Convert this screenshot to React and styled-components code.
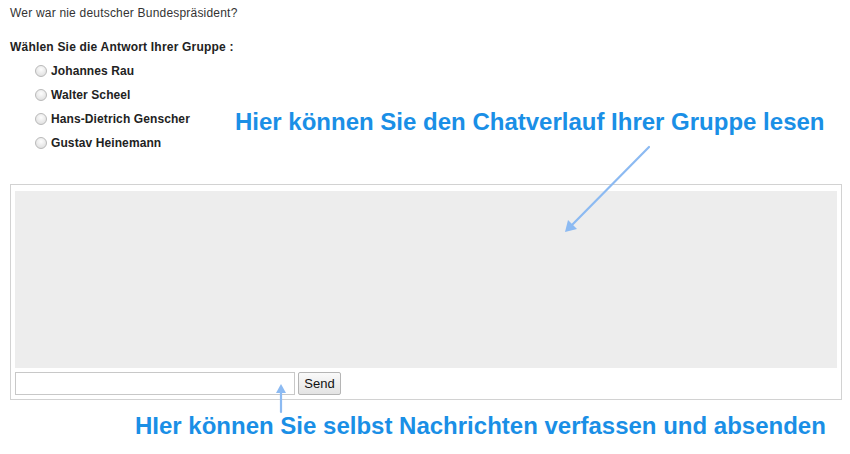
import React from "react";
import styled, { createGlobalStyle } from "styled-components";

const Global = createGlobalStyle`
  html, body { margin: 0; padding: 0; background: #fff; }
  body { font-family: "Liberation Sans", Arial, sans-serif; color: #333; }
`;

const Page = styled.div`
  position: relative;
  width: 850px;
  height: 454px;
  padding: 0 8px 0 10px;
  box-sizing: border-box;
  overflow: hidden;
`;

const Question = styled.p`
  margin: 0;
  padding-top: 6px;
  font-size: 12px;
  line-height: 14px;
  letter-spacing: 0.2px;
  color: #333;
`;

const Prompt = styled.p`
  margin: 20px 0 0;
  font-size: 12px;
  line-height: 14px;
  letter-spacing: 0.2px;
  font-weight: bold;
  color: #222;
`;

const Options = styled.div`
  display: flex;
  flex-direction: column;
  gap: 10px;
  margin-top: 10px;
  padding-left: 25px;
`;

const Option = styled.label`
  display: flex;
  align-items: center;
  gap: 4px;
  height: 14px;
  font-size: 12px;
  letter-spacing: 0.1px;
  font-weight: bold;
  color: #222;
`;

const Radio = styled.span`
  width: 10px;
  height: 10px;
  border-radius: 50%;
  border: 1px solid #b9b9b9;
  background: radial-gradient(circle at 50% 35%, #fdfdfd 0%, #e4e4e4 70%, #d2d2d2 100%);
  flex: none;
`;

const ChatBox = styled.div`
  margin-top: 34px;
  width: 832px;
  box-sizing: border-box;
  border: 1px solid #d2d2d2;
  padding: 6px 4px 4px 4px;
  display: flex;
  flex-direction: column;
  gap: 4px;
`;

const History = styled.div`
  height: 177px;
  background: #ededed;
`;

const InputRow = styled.div`
  display: flex;
  gap: 3px;
`;

const TextInput = styled.input`
  width: 280px;
  height: 23px;
  box-sizing: border-box;
  border: 1px solid #c8c8c8;
  background: #fff;
  padding: 0 4px;
  margin: 0;
  font-family: inherit;
`;

const SendButton = styled.button`
  width: 43px;
  height: 23px;
  box-sizing: border-box;
  border: 1px solid #b5b5b5;
  border-radius: 2px;
  background: linear-gradient(#fafafa, #e3e3e3);
  font-family: "Liberation Sans", Arial, sans-serif;
  font-size: 13px;
  color: #111;
  padding: 0;
  margin: 0;
`;

const Callout = styled.div`
  position: absolute;
  left: ${(p) => p.$x}px;
  top: ${(p) => p.$y}px;
  font-size: 24px;
  line-height: 28px;
  font-weight: bold;
  color: #1a8fe6;
  white-space: nowrap;
`;

const ArrowLayer = styled.svg`
  position: absolute;
  left: 0;
  top: 0;
  width: 850px;
  height: 454px;
  pointer-events: none;
`;

export default function App() {
  return (
    <>
      <Global />
      <Page>
        <Question>Wer war nie deutscher Bundespräsident?</Question>
        <Prompt>Wählen Sie die Antwort Ihrer Gruppe :</Prompt>
        <Options>
          {["Johannes Rau", "Walter Scheel", "Hans-Dietrich Genscher", "Gustav Heinemann"].map((n) => (
            <Option key={n}>
              <Radio />
              {n}
            </Option>
          ))}
        </Options>
        <ChatBox>
          <History />
          <InputRow>
            <TextInput />
            <SendButton>Send</SendButton>
          </InputRow>
        </ChatBox>
        <Callout $x={235} $y={108}>Hier können Sie den Chatverlauf Ihrer Gruppe lesen</Callout>
        <Callout $x={135} $y={412}>HIer können Sie selbst Nachrichten verfassen und absenden</Callout>
        <ArrowLayer viewBox="0 0 850 454">
          <g stroke="#8cbaf2" strokeWidth="2.2" fill="#8cbaf2" strokeLinecap="round">
            <line x1="649" y1="147" x2="570" y2="227" />
            <polygon points="565,232 568,220 577,229" stroke="none" />
            <line x1="281" y1="412" x2="281" y2="390" />
            <polygon points="281,384 276,393 286,393" stroke="none" />
          </g>
        </ArrowLayer>
      </Page>
    </>
  );
}
